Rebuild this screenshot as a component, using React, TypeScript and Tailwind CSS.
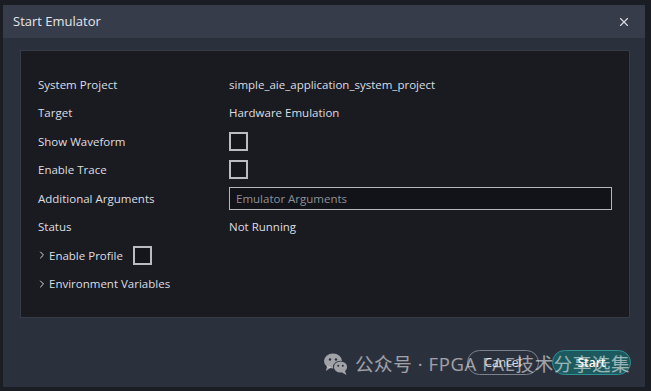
import React from 'react';
import { X, ChevronRight } from 'lucide-react';

const rows = [
  { label: 'System Project', value: 'simple_aie_application_system_project' },
  { label: 'Target', value: 'Hardware Emulation' },
];

function Checkbox() {
  return <div className="w-[19px] h-[19px] border-2 border-[#b9bcc2] bg-[#15161b]" />;
}

function WeChatIcon() {
  return (
    <svg width="26" height="24" viewBox="0 0 26 24" fill="currentColor">
      <ellipse cx="10" cy="9" rx="9" ry="7.5" />
      <path d="M4 14 L3 19 L8 15.5 Z" />
      <ellipse cx="17.5" cy="15" rx="7.5" ry="6.3" fill="#2b303d" />
      <ellipse cx="17.5" cy="15" rx="6.6" ry="5.5" />
      <path d="M22 19 L23.5 23 L19 20.5 Z" />
      <circle cx="7" cy="7.5" r="1.2" fill="#2b303d" />
      <circle cx="13" cy="7.5" r="1.2" fill="#2b303d" />
      <circle cx="15.2" cy="13.8" r="1" fill="#2b303d" />
      <circle cx="19.8" cy="13.8" r="1" fill="#2b303d" />
    </svg>
  );
}

export default function App() {
  return (
    <div
      className="w-[651px] h-[391px] bg-[#1b1d24] pt-[5px] pl-[3px] pr-[6px] pb-[4px] relative overflow-hidden"
      style={{ fontFamily: '"Open Sans", "Noto Sans CJK SC", sans-serif' }}
    >
      <div className="h-full flex flex-col bg-[#2b303d]">
        {/* title bar */}
        <div className="h-[33px] shrink-0 bg-[#373c4a] flex items-center justify-between pl-[10px] pr-[14px]">
          <span className="text-[13px] text-[#e3e5ea]">Start Emulator</span>
          <X className="w-[14px] h-[14px] text-[#d8dae0]" strokeWidth={2} />
        </div>

        {/* body */}
        <div className="flex-1 flex flex-col pl-[17px] pr-[15px] pt-[12px]">
          <div className="h-[268px] bg-[#1a1b21] border border-[#373b47] pl-[17px] pr-[17px] pt-[19px] text-[11.5px] text-[#dcdee3]">
            <div className="grid grid-cols-[191px_1fr] auto-rows-[28.5px] items-center">
              {rows.map((r) => (
                <React.Fragment key={r.label}>
                  <span>{r.label}</span>
                  <span>{r.value}</span>
                </React.Fragment>
              ))}
              <span>Show Waveform</span>
              <Checkbox />
              <span>Enable Trace</span>
              <Checkbox />
              <span>Additional Arguments</span>
              <div className="h-[23px] border border-[#b4b7bd] bg-[#121318] flex items-center px-[6px] text-[#8d9097]">
                Emulator Arguments
              </div>
              <span>Status</span>
              <span>Not Running</span>
              <div className="col-span-2 flex items-center">
                <ChevronRight className="w-[12px] h-[12px] -ml-[2px] mr-[1px]" strokeWidth={2} />
                <span>Enable Profile</span>
                <div className="ml-[10px]">
                  <Checkbox />
                </div>
              </div>
              <div className="col-span-2 flex items-center">
                <ChevronRight className="w-[12px] h-[12px] -ml-[2px] mr-[1px]" strokeWidth={2} />
                <span>Environment Variables</span>
              </div>
            </div>
          </div>

          {/* footer */}
          <div className="flex justify-end items-center gap-[13px] mt-[32px]">
            <button className="w-[72px] h-[25px] rounded-full border border-[#7d828d] text-[12px] text-[#d2d5da]">
              Cancel
            </button>
            <button className="w-[79px] h-[25px] rounded-full border border-[#2c9095] bg-[#1d5a60] text-[12px] font-semibold text-white -mr-[1px]">
              Start
            </button>
          </div>
        </div>
      </div>

      {/* watermark */}
      <div className="absolute left-[323px] top-[350px] flex items-center gap-[6px] text-white/55 pointer-events-none">
        <WeChatIcon />
        <span className="text-[18.5px] tracking-[0.6px]">公众号 · FPGA FAE技术分享选集</span>
      </div>
    </div>
  );
}
